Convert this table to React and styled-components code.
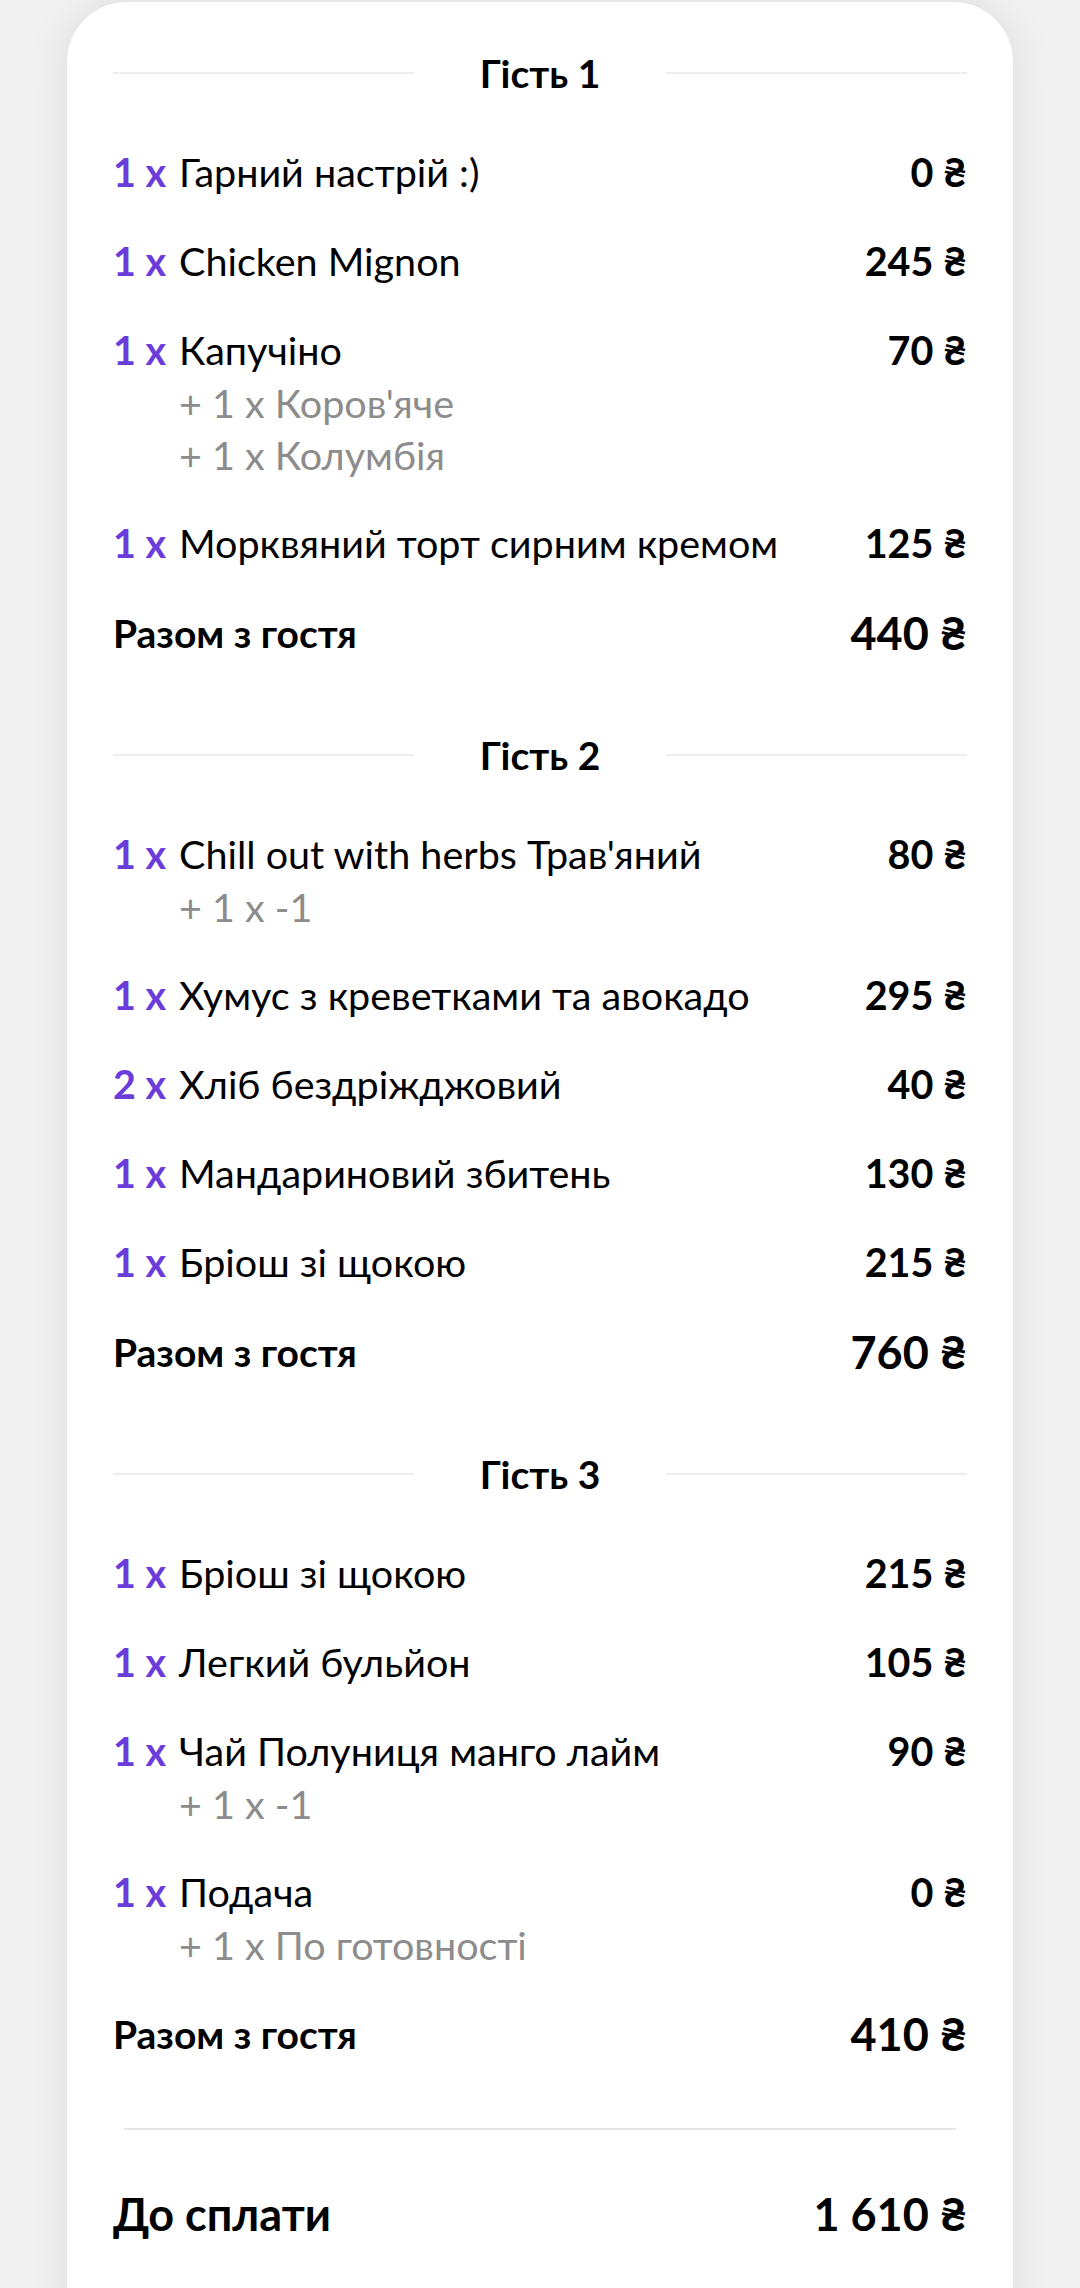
import React from 'react';
import styled, { createGlobalStyle } from 'styled-components';

const GlobalStyle = createGlobalStyle`
  html, body {
    margin: 0;
    padding: 0;
    background: #f1f1f1;
    font-family: Lato, "Noto Sans", sans-serif;
    color: #000;
  }
`;

const Page = styled.div`
  height: 2288px;
  overflow: hidden;
`;

const Card = styled.div`
  margin: 2px 67px 0;
  background: #fff;
  border-radius: 60px 60px 0 0;
  box-shadow: 0 0 44px rgba(0, 0, 0, 0.09);
  padding: 34px 46px 200px;
`;

const Section = styled.section`
  & + & {
    margin-top: 58px;
  }
`;

const GuestHeader = styled.div`
  display: flex;
  align-items: center;
  height: 74px;
  margin-bottom: 35px;

  &::before,
  &::after {
    content: '';
    flex: 1;
    height: 2px;
    background: #eeeeee;
  }
`;

const GuestTitle = styled.h3`
  margin: 0;
  padding: 0 66px;
  font-size: 39px;
  font-weight: 700;
`;

const Row = styled.div`
  display: flex;
  align-items: flex-start;
  & + & {
    margin-top: 35px;
  }
`;

const Qty = styled.span`
  flex: 0 0 auto;
  width: 66px;
  font-size: 39.5px;
  line-height: 54px;
  font-weight: 700;
  color: #6a3ddb;
  white-space: nowrap;
`;

const Body = styled.div`
  flex: 1;
  min-width: 0;
`;

const Name = styled.div`
  font-size: 39.5px;
  line-height: 54px;
`;

const Modifier = styled.div`
  font-size: 39.5px;
  line-height: 52px;
  color: #8c8c8c;
`;

const Price = styled.span`
  flex: 0 0 auto;
  margin-left: 24px;
  font-size: 39.5px;
  line-height: 54px;
  font-weight: 700;
  white-space: nowrap;
`;

const TotalRow = styled.div`
  display: flex;
  justify-content: space-between;
  align-items: center;
  height: 54px;
  margin-top: 36px;
`;

const TotalLabel = styled.span`
  font-size: 39px;
  font-weight: 700;
`;

const TotalValue = styled.span`
  font-size: 45px;
  font-weight: 700;
  white-space: nowrap;
`;

const Divider = styled.hr`
  border: 0;
  height: 2px;
  background: #e6e6e6;
  margin: 67px 11px 0;
`;

const PayRow = styled.div`
  display: flex;
  justify-content: space-between;
  align-items: center;
  height: 60px;
  margin-top: 54px;
`;

const PayLabel = styled.span`
  font-size: 45px;
  font-weight: 700;
`;

const PayValue = styled.span`
  font-size: 45px;
  font-weight: 700;
  white-space: nowrap;
`;

const guests = [
  {
    title: 'Гість 1',
    total: '440 ₴',
    items: [
      { qty: 1, name: 'Гарний настрій :)', price: '0 ₴' },
      { qty: 1, name: 'Chicken Mignon', price: '245 ₴' },
      { qty: 1, name: 'Капучіно', price: '70 ₴', mods: ["+ 1 x Коров'яче", '+ 1 x Колумбія'] },
      { qty: 1, name: 'Морквяний торт сирним кремом', price: '125 ₴' },
    ],
  },
  {
    title: 'Гість 2',
    total: '760 ₴',
    items: [
      { qty: 1, name: "Chill out with herbs Трав'яний", price: '80 ₴', mods: ['+ 1 x -1'] },
      { qty: 1, name: 'Хумус з креветками та авокадо', price: '295 ₴' },
      { qty: 2, name: 'Хліб бездріжджовий', price: '40 ₴' },
      { qty: 1, name: 'Мандариновий збитень', price: '130 ₴' },
      { qty: 1, name: 'Бріош зі щокою', price: '215 ₴' },
    ],
  },
  {
    title: 'Гість 3',
    total: '410 ₴',
    items: [
      { qty: 1, name: 'Бріош зі щокою', price: '215 ₴' },
      { qty: 1, name: 'Легкий бульйон', price: '105 ₴' },
      { qty: 1, name: 'Чай Полуниця манго лайм', price: '90 ₴', mods: ['+ 1 x -1'] },
      { qty: 1, name: 'Подача', price: '0 ₴', mods: ['+ 1 x По готовності'] },
    ],
  },
];

export default function App() {
  return (
    <Page>
      <GlobalStyle />
      <Card>
        {guests.map((g) => (
          <Section key={g.title}>
            <GuestHeader>
              <GuestTitle>{g.title}</GuestTitle>
            </GuestHeader>
            {g.items.map((it, i) => (
              <Row key={i}>
                <Qty>{it.qty} x</Qty>
                <Body>
                  <Name>{it.name}</Name>
                  {it.mods && it.mods.map((m) => <Modifier key={m}>{m}</Modifier>)}
                </Body>
                <Price>{it.price}</Price>
              </Row>
            ))}
            <TotalRow>
              <TotalLabel>Разом з гостя</TotalLabel>
              <TotalValue>{g.total}</TotalValue>
            </TotalRow>
          </Section>
        ))}
        <Divider />
        <PayRow>
          <PayLabel>До сплати</PayLabel>
          <PayValue>1 610 ₴</PayValue>
        </PayRow>
      </Card>
    </Page>
  );
}
